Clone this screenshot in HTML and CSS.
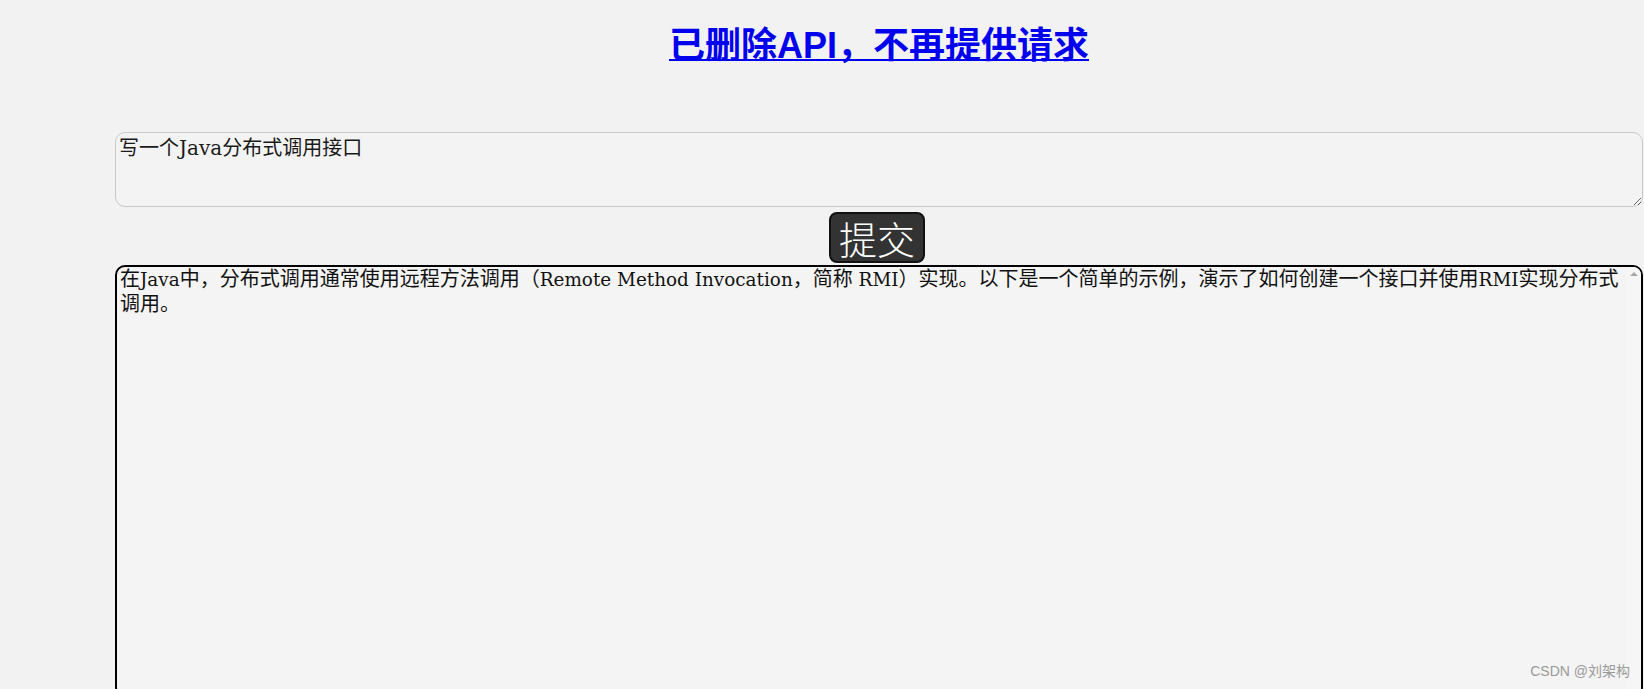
FILE: index.html
```html
<!DOCTYPE html>
<html lang="zh-CN">
<head>
<meta charset="utf-8">
<title>已删除API，不再提供请求</title>
<link rel="stylesheet" href="styles.css">
</head>
<body>
<div class="page">
  <div class="title"><a class="title-link" href="#">已删除API，不再提供请求</a></div>
  <textarea class="prompt">写一个Java分布式调用接口</textarea>
  <button class="submit" type="button">提交</button>
  <div class="answer">
    <div class="answer-text">在<span class="lat">Java</span>中，分布式调用通常使用远程方法调用（<span class="lat">Remote Method Invocation</span>，简称<span class="lat"> RMI</span>）实现。以下是一个简单的示例，演示了如何创建一个接口并使用<span class="lat">RMI</span>实现分布式<span class="cont">调用。</span></div>
    <div class="sbar"><span class="sbar-up"></span></div>
  </div>
</div>
<div class="watermark">CSDN @刘架构</div>
</body>
</html>
```
FILE: styles.css
```css
html, body {
  height: 689px;
  overflow: hidden;
}
body {
  margin: 0;
  background: #f2f2f2;
  font-family: "Liberation Sans", "Noto Sans CJK SC", sans-serif;
  position: relative;
  text-autospace: no-autospace;
}
.page {
  padding: 20px 0 0 115px;
  width: 1528px;
}
.title {
  text-align: center;
  font-size: 36px;
  line-height: 52px;
  font-weight: bold;
}
.title-link {
  color: #0000ee;
  text-decoration: underline;
  text-decoration-thickness: 2px;
}
.prompt {
  display: block;
  box-sizing: border-box;
  margin: 60px 0 0 0;
  width: 1528px;
  height: 75px;
  padding: 3px 3px;
  border: 1px solid #c9c9c9;
  border-radius: 10px;
  background: #f3f3f3;
  color: #1a1a1a;
  font-family: "DejaVu Serif", "Noto Sans CJK SC", serif;
  font-size: 20px;
  line-height: 24px;
  outline: none;
}
.submit {
  display: block;
  box-sizing: border-box;
  margin: 5px auto 0;
  height: 51px;
  padding: 0 8px;
  border: 2px solid #111;
  border-radius: 8px;
  background: #333;
  color: #fff;
  font-family: "Noto Sans CJK SC", sans-serif;
  font-size: 38px;
  font-weight: 300;
  line-height: 45px;
  position: relative;
  left: -2px;
}
.answer {
  display: flex;
  box-sizing: border-box;
  margin-top: 2px;
  width: 1528px;
  height: 432px;
  border: 2px solid #000;
  border-radius: 10px;
  background: #f4f4f4;
  overflow: hidden;
}
.answer-text {
  flex: 1;
  padding: 0 0 0 3px;
  color: #111;
  font-family: "DejaVu Serif", "Noto Sans CJK SC", serif;
  font-size: 20px;
  line-height: 25px;
}
.lat {
  font-size: 18.4px;
  line-height: 1;
}
.cont {
  color: inherit;
}
.sbar {
  width: 14px;
  background: #f6f6f6;
  display: flex;
  flex-direction: column;
  align-items: center;
}
.sbar-up {
  margin-top: 5px;
  width: 0;
  height: 0;
  border-left: 4px solid transparent;
  border-right: 4px solid transparent;
  border-bottom: 4px solid #a8a8a8;
}
.watermark {
  position: absolute;
  top: 663px;
  right: 14px;
  font-family: "Liberation Sans", "Noto Sans CJK SC", sans-serif;
  font-size: 14px;
  line-height: 16px;
  color: #9a9a9a;
}
```
